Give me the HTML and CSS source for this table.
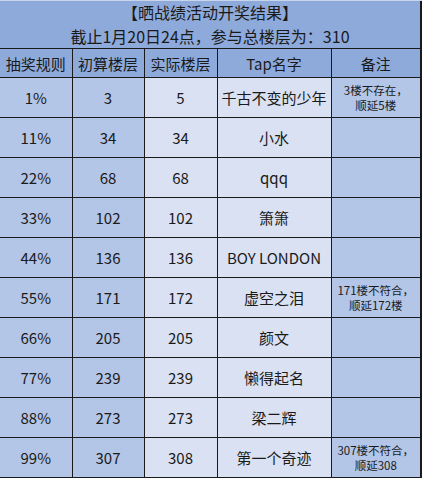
FILE: index.html
```html
<!DOCTYPE html>
<html lang="zh-CN">
  <head>
    <meta charset="UTF-8" />
    <title>晒战绩活动开奖结果</title>
    <link rel="stylesheet" href="styles.css">
  </head>
  <body>
    <div class="sheet">
      <div class="title">
        <div class="title-line">【晒战绩活动开奖结果】</div>
        <div class="title-line">截止1月20日24点，参与总楼层为：310</div>
      </div>
      <table class="result">
        <colgroup>
          <col class="c1"><col class="c2"><col class="c3"><col class="c4"><col class="c5">
        </colgroup>
        <thead>
          <tr>
            <th>抽奖规则</th><th>初算楼层</th><th>实际楼层</th><th>Tap名字</th><th>备注</th>
          </tr>
        </thead>
        <tbody>
          <tr><td>1%</td><td>3</td><td class="lt">5</td><td class="lt">千古不变的少年</td><td class="note">3楼不存在，<br>顺延5楼</td></tr>
          <tr><td>11%</td><td>34</td><td class="lt">34</td><td class="lt">小水</td><td class="note"></td></tr>
          <tr><td>22%</td><td>68</td><td class="lt">68</td><td class="lt">qqq</td><td class="note"></td></tr>
          <tr><td>33%</td><td>102</td><td class="lt">102</td><td class="lt">箫箫</td><td class="note"></td></tr>
          <tr><td>44%</td><td>136</td><td class="lt">136</td><td class="lt">BOY LONDON</td><td class="note"></td></tr>
          <tr><td>55%</td><td>171</td><td class="lt">172</td><td class="lt">虚空之泪</td><td class="note">171楼不符合，<br>顺延172楼</td></tr>
          <tr><td>66%</td><td>205</td><td class="lt">205</td><td class="lt">颜文</td><td class="note"></td></tr>
          <tr><td>77%</td><td>239</td><td class="lt">239</td><td class="lt">懒得起名</td><td class="note"></td></tr>
          <tr><td>88%</td><td>273</td><td class="lt">273</td><td class="lt">梁二辉</td><td class="note"></td></tr>
          <tr><td>99%</td><td>307</td><td class="lt">308</td><td class="lt">第一个奇迹</td><td class="note">307楼不符合，<br>顺延308</td></tr>
        </tbody>
      </table>
    </div>
  </body>
</html>
```

FILE: styles.css
```css
body {
  margin: 0;
  background: #ffffff;
  font-family: "Noto Sans CJK SC", "Noto Sans", sans-serif;
  color: #1a1a1a;
}

.sheet {
  width: 422px;
  border-top: 1px solid #c9d5ec;
}

.title {
  width: 420px;
  height: 47px;
  background-color: #8eaadb;
  border-right: 2px solid #1a1a1a;
  text-align: center;
  font-size: 16px;
}

.title-line {
  height: 23.5px;
  line-height: 23.5px;
}

.result {
  width: 421px;
  table-layout: fixed;
  border-collapse: collapse;
}

.c1 { width: 72px; }
.c2 { width: 72px; }
.c3 { width: 73px; }
.c4 { width: 114px; }
.c5 { width: 90px; }

.result th,
.result td {
  border: 1px solid #1a1a1a;
  text-align: center;
  padding: 0;
  font-size: 15px;
  font-weight: normal;
  white-space: nowrap;
}

.result th:first-child,
.result td:first-child {
  border-left: none;
}

.result th:last-child,
.result td:last-child {
  border-right: 2px solid #1a1a1a;
}

.result th {
  height: 28px;
  background-color: #8eaadb;
}

.result td {
  height: 39px;
  background-color: #b4c6e7;
}

.result td.lt {
  background-color: #d9e1f2;
}

.result td.note {
  font-size: 11.5px;
  line-height: 15px;
}

.result tbody tr:last-child td {
  border-bottom: 2px solid #1a1a1a;
}
```
